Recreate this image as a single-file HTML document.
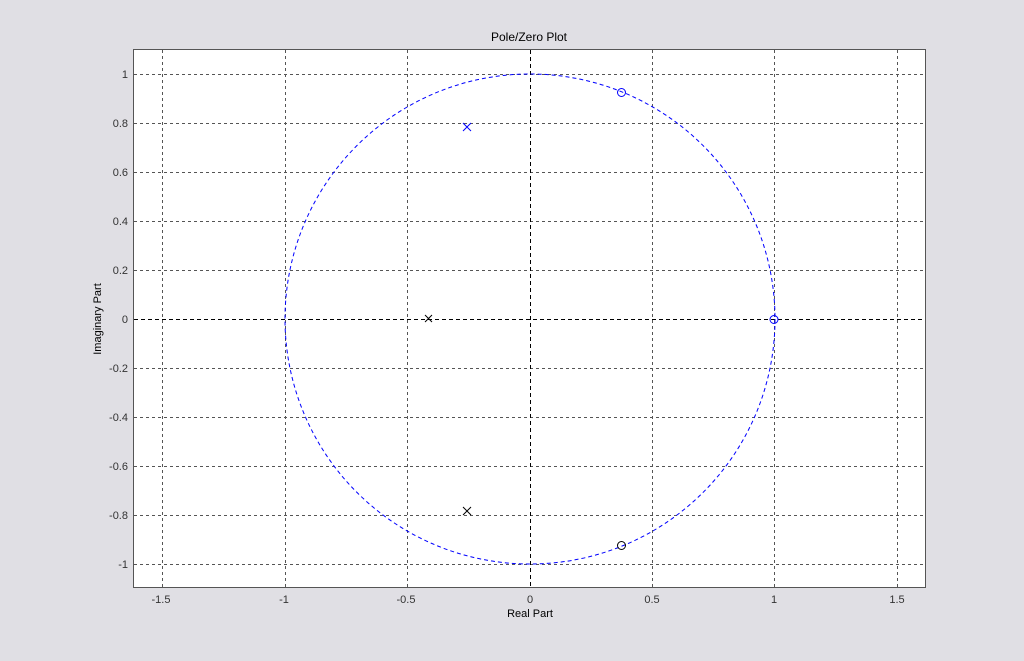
<!DOCTYPE html>
<html><head><style>
html,body{margin:0;padding:0;background:#e0dfe4;}
svg{display:block;font-family:"Liberation Sans",Arial,sans-serif;}
</style></head><body>
<svg width="1024" height="661" viewBox="0 0 1024 661">
<rect x="0" y="0" width="1024" height="661" fill="#e0dfe4"/>
<rect x="133.5" y="49.5" width="792" height="538" fill="#fff" stroke="#555" stroke-width="1"/>
<g stroke="#555" stroke-width="1" stroke-dasharray="3,3" fill="none">
<line x1="162.5" y1="50" x2="162.5" y2="587"/>
<line x1="285.5" y1="50" x2="285.5" y2="587"/>
<line x1="407.5" y1="50" x2="407.5" y2="587"/>
<line x1="652.5" y1="50" x2="652.5" y2="587"/>
<line x1="774.5" y1="50" x2="774.5" y2="587"/>
<line x1="897.5" y1="50" x2="897.5" y2="587"/>
<line x1="134" y1="74.5" x2="925" y2="74.5"/>
<line x1="134" y1="123.5" x2="925" y2="123.5"/>
<line x1="134" y1="172.5" x2="925" y2="172.5"/>
<line x1="134" y1="221.5" x2="925" y2="221.5"/>
<line x1="134" y1="270.5" x2="925" y2="270.5"/>
<line x1="134" y1="368.5" x2="925" y2="368.5"/>
<line x1="134" y1="417.5" x2="925" y2="417.5"/>
<line x1="134" y1="466.5" x2="925" y2="466.5"/>
<line x1="134" y1="515.5" x2="925" y2="515.5"/>
<line x1="134" y1="564.5" x2="925" y2="564.5"/>
</g>
<g stroke-width="1" stroke-dasharray="4,3" fill="none">
<line x1="134" y1="319.5" x2="925" y2="319.5" stroke="#000"/>
<line x1="530.5" y1="50" x2="530.5" y2="587" stroke="#000"/>
<circle cx="530" cy="319" r="245" stroke="#00f"/>
</g>
<g stroke-width="1" fill="none">
<path d="M463 123l8 8M471 123l-8 8" stroke="#00f"/>
<path d="M463 507l8 8M471 507l-8 8" stroke="#000"/>
<path d="M425 315l7 7M432 315l-7 7" stroke="#000"/>
<circle cx="621.5" cy="92.5" r="4" stroke="#00f"/>
<circle cx="621.5" cy="545.5" r="4" stroke="#000"/>
<circle cx="774" cy="319.5" r="4" stroke="#00f"/>
</g>
<g font-size="11" fill="#333" text-anchor="end">
<text x="128" y="78">1</text>
<text x="128" y="127">0.8</text>
<text x="128" y="176">0.6</text>
<text x="128" y="225">0.4</text>
<text x="128" y="274">0.2</text>
<text x="128" y="323">0</text>
<text x="128" y="372">-0.2</text>
<text x="128" y="421">-0.4</text>
<text x="128" y="470">-0.6</text>
<text x="128" y="519">-0.8</text>
<text x="128" y="568">-1</text>
</g>
<g font-size="11" fill="#333" text-anchor="middle">
<text x="161" y="603">-1.5</text>
<text x="284" y="603">-1</text>
<text x="406" y="603">-0.5</text>
<text x="530" y="603">0</text>
<text x="652" y="603">0.5</text>
<text x="774" y="603">1</text>
<text x="897" y="603">1.5</text>
<text x="530" y="617" fill="#000">Real Part</text>
<text x="529" y="41" font-size="12" fill="#000">Pole/Zero Plot</text>
<text transform="translate(101,319) rotate(-90)" fill="#000">Imaginary Part</text>
</g>
</svg>
</body></html>
